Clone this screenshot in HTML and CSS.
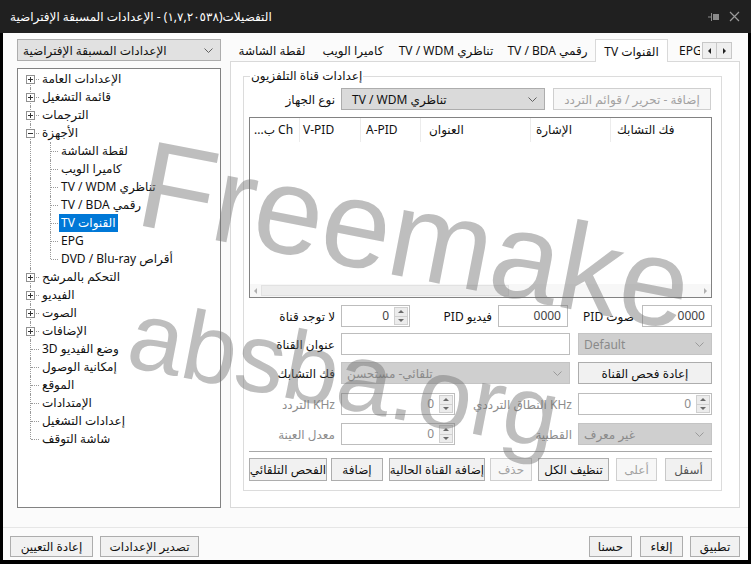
FILE: index.html
```html
<!DOCTYPE html>
<html lang="ar">
<head>
<meta charset="utf-8">
<title>Options</title>
<link rel="stylesheet" href="styles.css">
</head>
<body>
<div class="window">
  <div class="titlebar">
    <div class="title"><span dir="rtl">التفضيلات(١,٧,٢٠٥٣٨) - الإعدادات المسبقة الإفتراضية</span></div>
    <svg class="pin" width="12" height="10" viewBox="0 0 12 10"><path d="M0 5h3.5M3.5 1v8" stroke="#8a8a8a" fill="none"/><rect x="5" y="2" width="6" height="6" fill="#8a8a8a"/></svg>
    <svg class="close" width="11" height="11" viewBox="0 0 11 11"><path d="M1 1l9 9M10 1l-9 9" stroke="#9a9a9a" stroke-width="1.2" fill="none"/></svg>
  </div>
  <div class="client">
    <div class="main">
      <div class="left">
        <div class="combo preset"><span dir="rtl">الإعدادات المسبقة الإفتراضية</span><svg class="chev" width="9" height="5" viewBox="0 0 9 5"><path d="M0.5 0.5L4.5 4.5L8.5 0.5" stroke="#606060" fill="none"/></svg></div>
        <div class="tree">
          <div class="node"><span class="g0 first h"><svg class="pm" width="9" height="9" viewBox="0 0 9 9"><rect x=".5" y=".5" width="8" height="8" fill="#fff" stroke="#919191"/><path d="M2 4.5h5M4.5 2v5" stroke="#333"/></svg></span><span class="t" dir="rtl">الإعدادات العامة</span></div>
          <div class="node"><span class="g0 h"><svg class="pm" width="9" height="9" viewBox="0 0 9 9"><rect x=".5" y=".5" width="8" height="8" fill="#fff" stroke="#919191"/><path d="M2 4.5h5M4.5 2v5" stroke="#333"/></svg></span><span class="t" dir="rtl">قائمة التشغيل</span></div>
          <div class="node"><span class="g0 h"><svg class="pm" width="9" height="9" viewBox="0 0 9 9"><rect x=".5" y=".5" width="8" height="8" fill="#fff" stroke="#919191"/><path d="M2 4.5h5M4.5 2v5" stroke="#333"/></svg></span><span class="t" dir="rtl">الترجمات</span></div>
          <div class="node"><span class="g0 h"><svg class="pm" width="9" height="9" viewBox="0 0 9 9"><rect x=".5" y=".5" width="8" height="8" fill="#fff" stroke="#919191"/><path d="M2 4.5h5" stroke="#333"/></svg></span><span class="t" dir="rtl">الأجهزة</span></div>
          <div class="node"><span class="g0"></span><span class="g1 h"></span><span class="t" dir="rtl">لقطة الشاشة</span></div>
          <div class="node"><span class="g0"></span><span class="g1 h"></span><span class="t" dir="rtl">كاميرا الويب</span></div>
          <div class="node"><span class="g0"></span><span class="g1 h"></span><span class="t" dir="rtl">تناظري TV / WDM</span></div>
          <div class="node"><span class="g0"></span><span class="g1 h"></span><span class="t" dir="rtl">رقمي TV / BDA</span></div>
          <div class="node"><span class="g0"></span><span class="g1 h"></span><span class="t sel" dir="rtl">القنوات TV</span></div>
          <div class="node"><span class="g0"></span><span class="g1 h"></span><span class="t">EPG</span></div>
          <div class="node"><span class="g0"></span><span class="g1 h last"></span><span class="t" dir="rtl">أقراص DVD / Blu-ray</span></div>
          <div class="node"><span class="g0 h"><svg class="pm" width="9" height="9" viewBox="0 0 9 9"><rect x=".5" y=".5" width="8" height="8" fill="#fff" stroke="#919191"/><path d="M2 4.5h5M4.5 2v5" stroke="#333"/></svg></span><span class="t" dir="rtl">التحكم بالمرشح</span></div>
          <div class="node"><span class="g0 h"><svg class="pm" width="9" height="9" viewBox="0 0 9 9"><rect x=".5" y=".5" width="8" height="8" fill="#fff" stroke="#919191"/><path d="M2 4.5h5M4.5 2v5" stroke="#333"/></svg></span><span class="t" dir="rtl">الفيديو</span></div>
          <div class="node"><span class="g0 h"><svg class="pm" width="9" height="9" viewBox="0 0 9 9"><rect x=".5" y=".5" width="8" height="8" fill="#fff" stroke="#919191"/><path d="M2 4.5h5M4.5 2v5" stroke="#333"/></svg></span><span class="t" dir="rtl">الصوت</span></div>
          <div class="node"><span class="g0 h"><svg class="pm" width="9" height="9" viewBox="0 0 9 9"><rect x=".5" y=".5" width="8" height="8" fill="#fff" stroke="#919191"/><path d="M2 4.5h5M4.5 2v5" stroke="#333"/></svg></span><span class="t" dir="rtl">الإضافات</span></div>
          <div class="node"><span class="g0 h"></span><span class="t" dir="rtl">وضع الفيديو 3D</span></div>
          <div class="node"><span class="g0 h"></span><span class="t" dir="rtl">إمكانية الوصول</span></div>
          <div class="node"><span class="g0 h"></span><span class="t" dir="rtl">الموقع</span></div>
          <div class="node"><span class="g0 h"></span><span class="t" dir="rtl">الإمتدادات</span></div>
          <div class="node"><span class="g0 h"></span><span class="t" dir="rtl">إعدادات التشغيل</span></div>
          <div class="node"><span class="g0 h last"></span><span class="t" dir="rtl">شاشة التوقف</span></div>
        </div>
      </div>
      <div class="right">
        <div class="tabs">
          <div class="tab w1"><span dir="rtl">لقطة الشاشة</span></div>
          <div class="tab w2"><span dir="rtl">كاميرا الويب</span></div>
          <div class="tab w3"><span dir="rtl">تناظري TV / WDM</span></div>
          <div class="tab w4"><span dir="rtl">رقمي TV / BDA</span></div>
          <div class="tab w5 active"><span dir="rtl">القنوات TV</span></div>
          <div class="tab w6">EPG</div>
          <div class="tabscroll">
            <span class="sbtn"><i class="tri-l"></i></span><span class="sbtn"><i class="tri-r"></i></span>
          </div>
        </div>
        <div class="pane">
          <fieldset class="group">
            <legend><span dir="rtl">إعدادات قناة التلفزيون</span></legend>
            <div class="row dev">
              <div class="lbl w92"><span dir="rtl">نوع الجهاز</span></div>
              <div class="combo dcombo w204"><span dir="rtl">تناظري TV / WDM</span><svg class="chev" width="9" height="5" viewBox="0 0 9 5"><path d="M0.5 0.5L4.5 4.5L8.5 0.5" stroke="#606060" fill="none"/></svg></div>
              <div class="btn dis w158 ml8"><span dir="rtl">إضافة - تحرير / قوائم التردد</span></div>
            </div>
            <div class="list">
              <div class="lhead">
                <div class="col c1"><span dir="rtl">Ch ب...</span></div>
                <div class="col c2">V-PID</div>
                <div class="col c3">A-PID</div>
                <div class="col c4"><span dir="rtl">العنوان</span></div>
                <div class="col c5"><span dir="rtl">الإشارة</span></div>
                <div class="col c6"><span dir="rtl">فك التشابك</span></div>
              </div>
              <div class="lbody"></div>
              <div class="hscroll">
                <i class="tri-l sm"></i>
                <div class="thumb"></div>
                <i class="tri-r sm"></i>
              </div>
            </div>
            <div class="row r1">
              <div class="lbl w92"><span dir="rtl">لا توجد قناة</span></div>
              <div class="spin w69"><span class="val">0</span><span class="sb"><i class="up"></i><i class="dn"></i></span></div>
              <div class="lbl w88"><span dir="rtl">فيديو PID</span></div>
              <div class="edit num w70">0000</div>
              <div class="lbl w74"><span dir="rtl">صوت PID</span></div>
              <div class="edit num w70">0000</div>
            </div>
            <div class="row r2">
              <div class="lbl w92"><span dir="rtl">عنوان القناة</span></div>
              <div class="edit w229"></div>
              <div class="combo off w134 ml8"><span>Default</span><svg class="chev" width="9" height="5" viewBox="0 0 9 5"><path d="M0.5 0.5L4.5 4.5L8.5 0.5" stroke="#9a9a9a" fill="none"/></svg></div>
            </div>
            <div class="row r3">
              <div class="lbl w92"><span dir="rtl">فك التشابك</span></div>
              <div class="combo off w229"><span dir="rtl">تلقائي- مستحسن</span><svg class="chev" width="9" height="5" viewBox="0 0 9 5"><path d="M0.5 0.5L4.5 4.5L8.5 0.5" stroke="#9a9a9a" fill="none"/></svg></div>
              <div class="btn w134 ml8"><span dir="rtl">إعادة فحص القناة</span></div>
            </div>
            <div class="row r4">
              <div class="lbl gray w92"><span dir="rtl">KHz التردد</span></div>
              <div class="spin w114"><span class="val gray">0</span><span class="sb"><i class="up"></i><i class="dn"></i></span></div>
              <div class="lbl gray w123"><span dir="rtl">KHz النطاق الترددي</span></div>
              <div class="spin w134"><span class="val gray">0</span><span class="sb"><i class="up"></i><i class="dn"></i></span></div>
            </div>
            <div class="row r5">
              <div class="lbl gray w92"><span dir="rtl">معدل العينة</span></div>
              <div class="spin w114"><span class="val gray">0</span><span class="sb"><i class="up"></i><i class="dn"></i></span></div>
              <div class="lbl gray w123"><span dir="rtl">القطبية</span></div>
              <div class="combo off w134"><span dir="rtl">غير معرف</span><svg class="chev" width="9" height="5" viewBox="0 0 9 5"><path d="M0.5 0.5L4.5 4.5L8.5 0.5" stroke="#9a9a9a" fill="none"/></svg></div>
            </div>
            <div class="sep"></div>
            <div class="row btns">
              <div class="btn b1"><span dir="rtl">الفحص التلقائي</span></div>
              <div class="btn b2"><span dir="rtl">إضافة</span></div>
              <div class="btn b3"><span dir="rtl">إضافة القناة الحالية</span></div>
              <div class="btn dis b4"><span dir="rtl">حذف</span></div>
              <div class="btn b5"><span dir="rtl">تنظيف الكل</span></div>
              <div class="btn dis b6"><span dir="rtl">أعلى</span></div>
              <div class="btn semi b7"><span dir="rtl">أسفل</span></div>
            </div>
          </fieldset>
        </div>
      </div>
    </div>
    <div class="bottombar">
      <div class="bgroup">
        <div class="btn bb1"><span dir="rtl">إعادة التعيين</span></div>
        <div class="btn bb2"><span dir="rtl">تصدير الإعدادات</span></div>
      </div>
      <div class="bgroup">
        <div class="btn bb3"><span dir="rtl">حسنا</span></div>
        <div class="btn bb4"><span dir="rtl">إلغاء</span></div>
        <div class="btn bb5"><span dir="rtl">تطبيق</span></div>
      </div>
    </div>
    <div class="watermark">
      <div class="wm wm1">Freemake</div>
      <div class="wm wm2">absba.org</div>
    </div>
  </div>
</div>
</body>
</html>
```

FILE: styles.css
```css
* { box-sizing: border-box; }
html, body { margin: 0; padding: 0; }
body {
  background: #000;
  font-family: "Noto Sans", "DejaVu Sans", sans-serif;
  font-size: 12px;
  color: #111;
}
.window {
  width: 751px;
  height: 564px;
  display: flex;
  flex-direction: column;
  background: #000;
  overflow: hidden;
}
.titlebar {
  height: 33px;
  flex: none;
  background: #202020;
  display: flex;
  align-items: center;
  padding: 0 11px 0 10px;
  color: #fff;
}
.title { flex: 1; font-size: 12px; white-space: nowrap; }
.pin { margin-right: 9px; }

.client {
  position: relative;
  flex: 1;
  margin: 0 3px 4px;
  background: #fbfbfb;
  display: flex;
  flex-direction: column;
  overflow: hidden;
}
.main {
  display: flex;
  gap: 9px;
  padding: 6px 8px 0 14px;
  height: 475px;
  flex: none;
}
.left { width: 204px; display: flex; flex-direction: column; gap: 7px; }
.right { width: 510px; display: flex; flex-direction: column; }

/* combos */
.combo {
  height: 22px;
  border: 1px solid #adadad;
  background: #e1e1e1;
  display: flex;
  align-items: center;
  justify-content: space-between;
  padding: 0 7px 0 5px;
  white-space: nowrap;
  flex: none;
}
.combo.dcombo { background: #dadada; padding-left: 10px; }
.combo.off { background: #cfcfcf; border-color: #c4c4c4; color: #8a8a8a; padding-left: 5px; }

/* tree */
.tree {
  height: 440px;
  border: 1px solid #828282;
  background: #fff;
  padding: 1px 0;
}
.node { height: 18px; display: flex; align-items: center; white-space: nowrap; }
.g0, .g1 { height: 18px; position: relative; flex: none; }
.g0 { width: 22px; }
.g1 { width: 19px; }
.g0::before, .g1::before {
  content: "";
  position: absolute;
  top: 0;
  bottom: 0;
  border-left: 1px dotted #9a9a9a;
}
.g0::before { left: 12px; }
.g1::before { left: 10px; }
.g0.first::before { top: 9px; }
.g0.last::before, .g1.last::before { bottom: 9px; }
.g0.h::after, .g1.h::after {
  content: "";
  position: absolute;
  top: 9px;
  border-top: 1px dotted #9a9a9a;
}
.g0.h::after { left: 13px; width: 8px; }
.g1.h::after { left: 11px; width: 7px; }
.pm { position: absolute; left: 8px; top: 5px; z-index: 1; }
.t { padding: 0 2px; line-height: 18px; height: 18px; display: inline-block; }
.t.sel { background: #0078d7; color: #fff; }

/* tabs */
.tabs { height: 22px; display: flex; align-items: flex-end; flex: none; }
.tab {
  height: 22px;
  display: flex;
  align-items: center;
  justify-content: center;
  flex: none;
  white-space: nowrap;
}
.tab.active {
  height: 23px;
  border: 1px solid #d9d9d9;
  border-bottom: none;
  background: #fff;
  margin-bottom: -1px;
  position: relative;
  z-index: 1;
}
.w1 { width: 84px; }
.w2 { width: 78px; }
.w3 { width: 108px; }
.w4 { width: 95px; }
.w5 { width: 73px; }
.w6 { width: 32px; justify-content: flex-start; padding-left: 11px; overflow: hidden; }
.tabscroll { display: flex; align-self: center; margin-top: 1px; margin-left: 2px; }
.sbtn {
  width: 15px;
  height: 17px;
  border: 1px solid #c8c8c8;
  background: #efefef;
  display: flex;
  align-items: center;
  justify-content: center;
}
.sbtn + .sbtn { border-left: none; }
.tri-l { width: 0; height: 0; border-top: 3px solid transparent; border-bottom: 3px solid transparent; border-right: 3px solid #222; }
.tri-r { width: 0; height: 0; border-top: 3px solid transparent; border-bottom: 3px solid transparent; border-left: 3px solid #222; }
.tri-l.sm { border-right-color: #b0b0b0; }
.tri-r.sm { border-left-color: #b0b0b0; }

.pane {
  flex: 1;
  border: 1px solid #d9d9d9;
  background: #fff;
  padding: 7px 17px 0 12px;
}

/* group box */
.group {
  margin: 0;
  min-width: 0;
  border: 1px solid #dcdcdc;
  padding: 5px 9px 9px 5px;
}
.group legend { padding: 0 1px; margin-left: 1px; line-height: 14px; }

.row { display: flex; align-items: center; height: 22px; }
.dev { margin-bottom: 7px; }
.r1 { margin-bottom: 6px; }
.r2 { margin-bottom: 7px; }
.r3 { margin-bottom: 9px; }
.r4 { margin-bottom: 8px; }

.lbl { text-align: right; padding-right: 6px; white-space: nowrap; flex: none; }
.gray { color: #8d8d8d; }
.w92 { width: 92px; }
.w88 { width: 88px; }
.w74 { width: 74px; padding-right: 8px; }
.w123 { width: 123px; }
.w69 { width: 69px; }
.w70 { width: 70px; }
.w114 { width: 114px; }
.w134 { width: 134px; }
.w158 { width: 158px; }
.w204 { width: 204px; }
.w229 { width: 229px; }
.ml8 { margin-left: 8px; }

.edit {
  height: 22px;
  border: 1px solid #bdbdbd;
  background: #fff;
  flex: none;
  line-height: 20px;
  padding: 0 6px;
}
.edit.num { text-align: right; color: #444; }

.spin {
  height: 22px;
  display: flex;
  border: 1px solid #bdbdbd;
  background: #fff;
  flex: none;
}
.val { flex: 1; text-align: right; padding-right: 5px; line-height: 20px; color: #444; }
.val.gray { color: #8d8d8d; }
.sb { width: 15px; display: flex; flex-direction: column; padding: 1px 1px 1px 0; }
.sb i {
  flex: 1;
  background: #ececec;
  border: 1px solid #d0d0d0;
  display: flex;
  align-items: center;
  justify-content: center;
}
.sb i + i { border-top: none; }
.sb .up::before { content: ""; border-left: 3px solid transparent; border-right: 3px solid transparent; border-bottom: 3px solid #6a6a6a; }
.sb .dn::before { content: ""; border-left: 3px solid transparent; border-right: 3px solid transparent; border-top: 3px solid #6a6a6a; }

/* buttons */
.btn {
  height: 22px;
  border: 1px solid #adadad;
  background: #f1f1f1;
  display: flex;
  align-items: center;
  justify-content: center;
  white-space: nowrap;
  overflow: hidden;
  flex: none;
}
.btn.dis { border-color: #cfcfcf; background: #f7f7f7; color: #a2a2a2; }
.btn.semi { border-color: #c8c8c8; color: #555; }

/* list view */
.list {
  height: 181px;
  border: 1px solid #828282;
  background: #fff;
  display: flex;
  flex-direction: column;
  margin-bottom: 7px;
}
.lhead { height: 24px; display: flex; flex: none; }
.col {
  height: 24px;
  line-height: 24px;
  padding-left: 6px;
  border-right: 1px solid #ececec;
  white-space: nowrap;
  overflow: hidden;
  flex: none;
}
.c1 { width: 50px; padding-left: 4px; }
.c2 { width: 61px; padding-left: 3px; }
.c3 { width: 60px; padding-left: 5px; }
.c4 { width: 110px; padding-left: 8px; }
.c5 { width: 80px; padding-left: 5px; }
.c6 { width: 98px; border-right: none; }
.lbody { flex: 1; }
.hscroll {
  height: 13px;
  flex: none;
  display: flex;
  align-items: center;
  padding: 0 4px;
  gap: 4px;
  background: #f7f7f7;
}
.thumb { height: 11px; width: 248px; background: #ededed; border: 1px solid #e2e2e2; margin-right: auto; }

.sep { height: 1px; background: #a8a8a8; margin: 6px 0 6px 0; }
.btns { height: 23px; gap: 6px; }
.btns .btn { height: 23px; }
.b1 { width: 78px; padding: 0; margin-right: -2px; }
.b2 { width: 52px; }
.b3 { width: 96px; margin-right: -1px; }
.b4 { width: 42px; }
.b5 { width: 71px; }
.b6 { width: 41px; margin-left: 1px; }
.b7 { width: 47px; margin-left: 2px; }

/* bottom bar */
.bottombar {
  margin-top: 19px;
  border-top: 1px solid #e6e6e6;
  padding: 8px 8px 3px 7px;
  display: flex;
  justify-content: space-between;
  flex: none;
}
.bgroup { display: flex; gap: 7px; }
.bottombar .btn { height: 21px; }
.bb1 { width: 83px; }
.bb2 { width: 99px; }
.bb3 { width: 43px; }
.bb4 { width: 43px; margin-left: 1px; }
.bb5 { width: 50px; }

/* watermark */
.watermark { position: absolute; left: 0; top: 0; right: 0; bottom: 0; pointer-events: none; z-index: 5; }
.wm {
  position: absolute;
  font-family: "Liberation Sans", Arial, sans-serif;
  line-height: 1;
  color: rgba(110, 110, 110, 0.45);
  white-space: nowrap;
}
.wm1 { font-size: 124px; left: 130px; top: 86px; transform-origin: 0 105px; transform: rotate(11deg); }
.wm2 { font-size: 98px; left: 121px; top: 250px; transform-origin: 0 83px; transform: rotate(11deg); }
```
